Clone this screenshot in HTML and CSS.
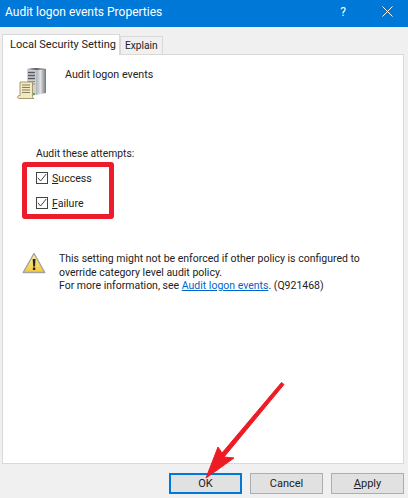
FILE: index.html
```html
<!DOCTYPE html>
<html lang="en">
<head>
<meta charset="utf-8">
<title>Audit logon events Properties</title>
<link rel="stylesheet" href="styles.css">
</head>
<body>
<div class="dialog">
  <header class="titlebar">
    <span class="title">Audit logon events Properties</span>
    <span class="help">?</span>
    <svg class="close" width="11" height="11" viewBox="0 0 11 11"><path d="M.5.5l10 10M10.500.5l-10 10" stroke="#fff" stroke-width="1" fill="none"/></svg>
  </header>
  <div class="tabs">
    <div class="tab active">Local Security Setting</div>
    <div class="tab">Explain</div>
  </div>
  <main class="panel">
    <div class="head">
      <svg class="server" width="30" height="33" viewBox="0 0 30 33">
        <defs>
          <linearGradient id="sv" x1="0" x2="1" y1="0" y2="0"><stop offset="0" stop-color="#aeb2b5"/><stop offset=".45" stop-color="#dfe1e2"/><stop offset="1" stop-color="#73787c"/></linearGradient>
        </defs>
        <path d="M10 2l9-1v27l-9 2z" fill="#cfd2d4"/>
        <path d="M19 1l10 1v24l-10 2z" fill="url(#sv)"/>
        <path d="M10 2l9-1 10 1-10 1z" fill="#5e6266"/>
        <path d="M11 5.500h7M11 8.500h7M11 11.500h7" stroke="#565a5f" stroke-width="1.500"/>
        <path d="M11 14.500h7M11 17h7" stroke="#85898e"/>
        <rect x="15" y="26" width="3" height="2" fill="#58b050"/>
        <path d="M3 15h12.500v14.500c0 1 .7 2 1.500 2H3c-1.500 0-2.500-.6-2.500-1.500s1-1.500 2.500-1.500z" fill="#f3e8bf" stroke="#a89a70"/>
        <path d="M5 18h8M5 20.500h8M5 23h8M5 25.500h8" stroke="#857d62"/>
      </svg>
      <span class="event">Audit logon events</span>
    </div>
    <fieldset class="attempts">
      <div class="label">Audit these attempts:</div>
      <label class="check"><span class="box"><svg width="10" height="10" viewBox="0 0 10 10"><path d="M.8 4.800l2.800 3.200 5.600-7" stroke="#444" stroke-width="1" fill="none"/></svg></span><span><u>S</u>uccess</span></label>
      <label class="check"><span class="box"><svg width="10" height="10" viewBox="0 0 10 10"><path d="M.8 4.800l2.800 3.200 5.600-7" stroke="#444" stroke-width="1" fill="none"/></svg></span><span><u>F</u>ailure</span></label>
      <div class="highlight"></div>
    </fieldset>
    <div class="notice">
      <svg class="warn" width="24" height="22" viewBox="0 0 24 22">
        <defs><linearGradient id="wg" x1="0" x2="0" y1="0" y2="1"><stop offset="0" stop-color="#fdf2a8"/><stop offset="1" stop-color="#f3c73a"/></linearGradient></defs>
        <path d="M12 1.500L22.800 20.500H1.200z" fill="url(#wg)" stroke="#a2a2a0" stroke-width="1.400" stroke-linejoin="round"/>
        <path d="M10.700 7h2.800l-.5 7.500h-1.800z" fill="#222"/>
        <rect x="10.900" y="15.500" width="2.400" height="2.500" fill="#222"/>
      </svg>
      <p class="message">This setting might not be enforced if other policy is configured to<br>override category level audit policy.<br>For more information, see <a href="#">Audit logon events</a>. (Q921468)</p>
    </div>
  </main>
  <footer class="buttons">
    <button class="btn default">OK</button>
    <button class="btn">Cancel</button>
    <button class="btn"><u>A</u>pply</button>
  </footer>
  <svg class="arrow" width="408" height="498" viewBox="0 0 408 498">
    <path d="M281.500 382.500L284 384.500L224 457L234 458L206 478L218 447L222 453z" fill="#ed1c24" stroke="#ed1c24" stroke-linejoin="round"/>
  </svg>
</div>
</body>
</html>
```
FILE: styles.css
```css
* { box-sizing: border-box; }
html, body { margin: 0; padding: 0; }
body { width: 408px; height: 498px; overflow: hidden; font-family: Roboto, "Open Sans", sans-serif; font-size: 10.5px; color: #222; }
.dialog { position: relative; width: 408px; height: 498px; background: #f0f0f0; display: flex; flex-direction: column; }
.titlebar { height: 27px; background: #0078d7; color: #fff; display: flex; align-items: center; padding: 0 15px 4px 5px; font-size: 12px; }
.title { flex: 1; }
.help { margin-right: 36px; }
.tabs { display: flex; align-items: flex-end; height: 27px; padding-left: 2px; font-size: 11px; }
.tab { width: 43px; height: 18px; padding: 0 4px; background: #f0f0f0; border: 1px solid #d9d9d9; border-bottom: none; line-height: 17px; white-space: nowrap; font-size: 10.2px; }
.tab.active { height: 21px; width: 118px; background: #fff; line-height: 19px; padding-left: 7px; position: relative; z-index: 1; margin-bottom: -1px; font-size: 11px; }
.panel { margin: 0 4px 0 2px; height: 410px; background: #fff; border: 1px solid #d9d9d9; padding: 12px 0 0 14px; }
.head { display: flex; height: 79px; }
.event { margin-left: 18px; line-height: 16px; font-size: 10.7px; }
.attempts { position: relative; border: 0; margin: 0; padding: 0 0 0 19px; height: 106px; }
.label { line-height: 15px; font-size: 10.3px; }
.check { display: flex; align-items: center; gap: 4px; height: 12px; font-size: 10.6px; }
.label + .check { margin-top: 11px; }
.check + .check { margin-top: 13px; }
.box { flex: none; width: 12px; height: 12px; border: 1px solid #444; background: #fff; display: flex; align-items: center; justify-content: center; }
.highlight { position: absolute; left: 5px; top: 16px; width: 92px; height: 57px; border: 5px solid #ed1c2c; border-radius: 3px; }
.notice { display: flex; padding-left: 5px; gap: 13px; }
.message { margin: 0; line-height: 13.500px; }
a { color: #0066cc; }
.buttons { flex: 1; display: flex; justify-content: flex-end; gap: 8px; padding: 9px 4px 0 0; }
.btn { width: 73px; height: 21px; background: #e1e1e1; border: 1px solid #adadad; font: inherit; font-size: 11px; color: #222; padding: 0; }
.btn.default { border: 2px solid #0078d7; }
.arrow { position: absolute; left: 0; top: 0; pointer-events: none; }
```
